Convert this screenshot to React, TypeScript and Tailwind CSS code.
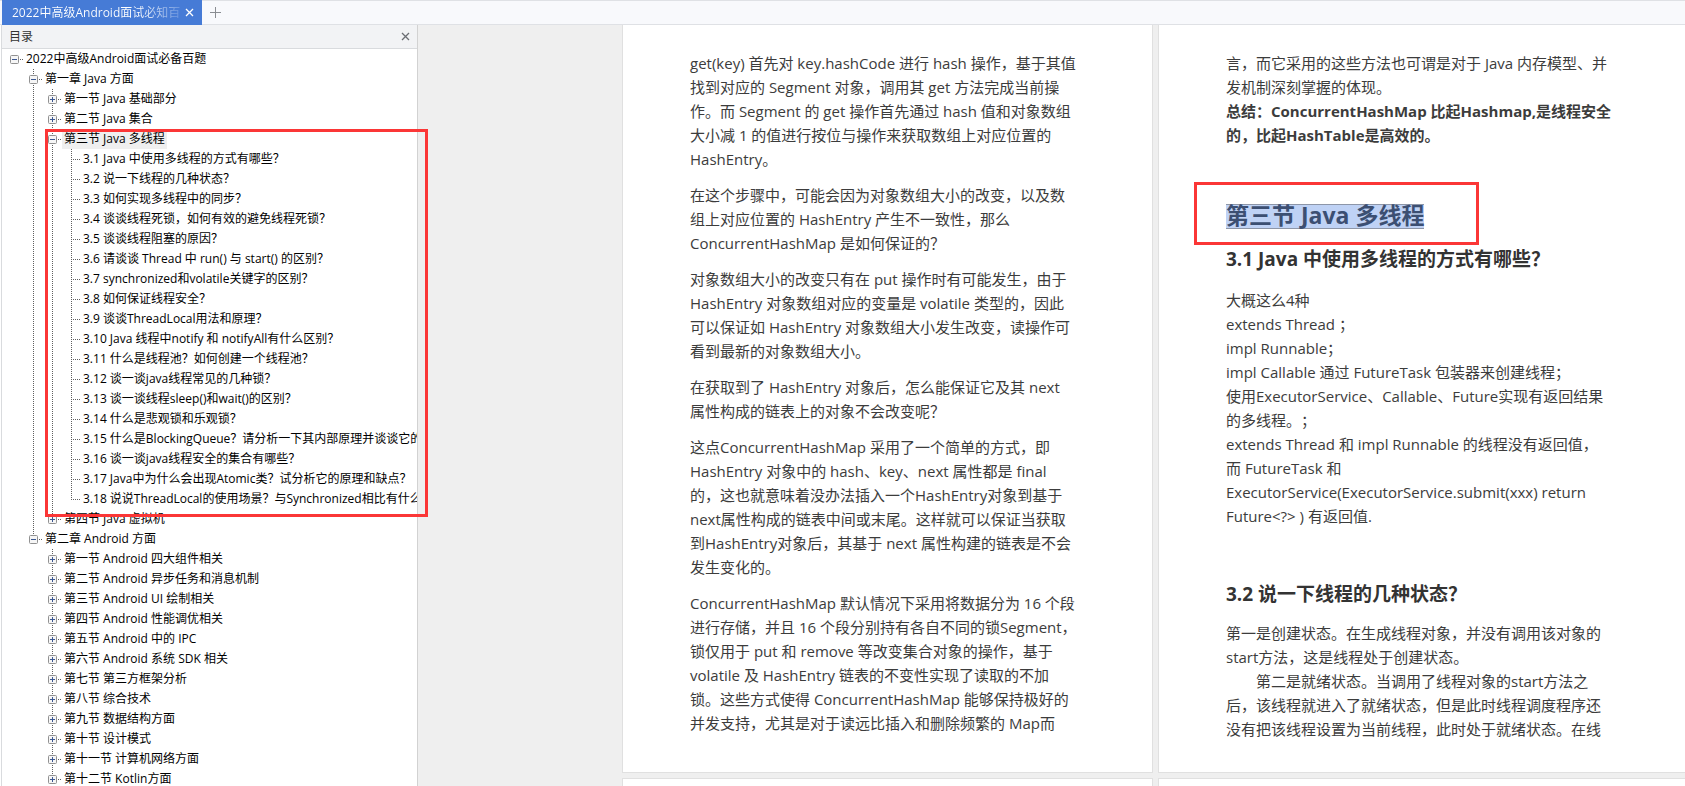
type TreeNode = {
  title: string;
  open?: boolean;
  selected?: boolean;
  children?: TreeNode[];
};

const section = (title: string): TreeNode => ({ title, open: false, children: [] });
const leaf = (title: string): TreeNode => ({ title });

const outline: TreeNode = {
  title: "2022中高级Android面试必备百题",
  open: true,
  children: [
    {
      title: "第一章 Java 方面",
      open: true,
      children: [
        section("第一节 Java 基础部分"),
        section("第二节 Java 集合"),
        {
          title: "第三节 Java 多线程",
          open: true,
          selected: true,
          children: [
            leaf("3.1 Java 中使用多线程的方式有哪些？"),
            leaf("3.2 说一下线程的几种状态？"),
            leaf("3.3 如何实现多线程中的同步？"),
            leaf("3.4 谈谈线程死锁，如何有效的避免线程死锁？"),
            leaf("3.5 谈谈线程阻塞的原因？"),
            leaf("3.6 请谈谈 Thread 中 run() 与 start() 的区别？"),
            leaf("3.7 synchronized和volatile关键字的区别？"),
            leaf("3.8 如何保证线程安全？"),
            leaf("3.9 谈谈ThreadLocal用法和原理？"),
            leaf("3.10 Java 线程中notify 和 notifyAll有什么区别？"),
            leaf("3.11 什么是线程池？如何创建一个线程池？"),
            leaf("3.12 谈一谈java线程常见的几种锁？"),
            leaf("3.13 谈一谈线程sleep()和wait()的区别？"),
            leaf("3.14 什么是悲观锁和乐观锁？"),
            leaf("3.15 什么是BlockingQueue？请分析一下其内部原理并谈谈它的"),
            leaf("3.16 谈一谈java线程安全的集合有哪些？"),
            leaf("3.17 Java中为什么会出现Atomic类？试分析它的原理和缺点？"),
            leaf("3.18 说说ThreadLocal的使用场景？与Synchronized相比有什么"),
          ],
        },
        section("第四节 Java 虚拟机"),
      ],
    },
    {
      title: "第二章 Android 方面",
      open: true,
      children: [
        section("第一节 Android 四大组件相关"),
        section("第二节 Android 异步任务和消息机制"),
        section("第三节 Android UI 绘制相关"),
        section("第四节 Android 性能调优相关"),
        section("第五节 Android 中的 IPC"),
        section("第六节 Android 系统 SDK 相关"),
        section("第七节 第三方框架分析"),
        section("第八节 综合技术"),
        section("第九节 数据结构方面"),
        section("第十节 设计模式"),
        section("第十一节 计算机网络方面"),
        section("第十二节 Kotlin方面"),
      ],
    },
  ],
};

const leftPage: string[][] = [
  [
    "get(key) 首先对 key.hashCode 进行 hash 操作，基于其值",
    "找到对应的 Segment 对象，调用其 get 方法完成当前操",
    "作。而 Segment 的 get 操作首先通过 hash 值和对象数组",
    "大小减 1 的值进行按位与操作来获取数组上对应位置的",
    "HashEntry。",
  ],
  [
    "在这个步骤中，可能会因为对象数组大小的改变，以及数",
    "组上对应位置的 HashEntry 产生不一致性，那么",
    "ConcurrentHashMap 是如何保证的？",
  ],
  [
    "对象数组大小的改变只有在 put 操作时有可能发生，由于",
    "HashEntry 对象数组对应的变量是 volatile 类型的，因此",
    "可以保证如 HashEntry 对象数组大小发生改变，读操作可",
    "看到最新的对象数组大小。",
  ],
  ["在获取到了 HashEntry 对象后，怎么能保证它及其 next", "属性构成的链表上的对象不会改变呢？"],
  [
    "这点ConcurrentHashMap 采用了一个简单的方式，即",
    "HashEntry 对象中的 hash、key、next 属性都是 final",
    "的，这也就意味着没办法插入一个HashEntry对象到基于",
    "next属性构成的链表中间或末尾。这样就可以保证当获取",
    "到HashEntry对象后，其基于 next 属性构建的链表是不会",
    "发生变化的。",
  ],
  [
    "ConcurrentHashMap 默认情况下采用将数据分为 16 个段",
    "进行存储，并且 16 个段分别持有各自不同的锁Segment，",
    "锁仅用于 put 和 remove 等改变集合对象的操作，基于",
    "volatile 及 HashEntry 链表的不变性实现了读取的不加",
    "锁。这些方式使得 ConcurrentHashMap 能够保持极好的",
    "并发支持，尤其是对于读远比插入和删除频繁的 Map而",
  ],
];

const threadWays = [
  "大概这么4种",
  "extends Thread ；",
  "impl Runnable；",
  "impl Callable 通过 FutureTask 包装器来创建线程；",
  "使用ExecutorService、Callable、Future实现有返回结果",
  "的多线程。；",
  "extends Thread 和 impl Runnable 的线程没有返回值，",
  "而 FutureTask 和",
  "ExecutorService(ExecutorService.submit(xxx) return",
  "Future<?> ) 有返回值.",
];

const threadStates = [
  "第一是创建状态。在生成线程对象，并没有调用该对象的",
  "start方法，这是线程处于创建状态。",
  "　　第二是就绪状态。当调用了线程对象的start方法之",
  "后，该线程就进入了就绪状态，但是此时线程调度程序还",
  "没有把该线程设置为当前线程，此时处于就绪状态。在线",
];

const Paragraph = ({ lines, bold }: { lines: string[]; bold?: boolean }) => (
  <p className={bold ? "font-bold" : ""}>
    {lines.map((line) => (
      <span key={line} className="block whitespace-nowrap">
        {line}
      </span>
    ))}
  </p>
);

type GuideProps = { up?: boolean; down?: boolean; branch?: boolean };

// dotted connector lines for one indent step of the tree
const Guide = ({ up, down, branch }: GuideProps) => (
  <svg width="19" height="20" className="block shrink-0" stroke="#5f5f5f" strokeDasharray="1 1" aria-hidden="true">
    {up && <path d="M9.5 0V10" />}
    {down && <path d="M9.5 10V20" />}
    {branch && <path d="M9 10.5H18" />}
  </svg>
);

const Toggle = ({ up, down, open }: { up: boolean; down: boolean; open: boolean }) => (
  <button type="button" aria-label={open ? "折叠" : "展开"} className="block shrink-0">
    <svg width="19" height="20" className="block" fill="none">
      <g stroke="#5f5f5f" strokeDasharray="1 1">
        {up && <path d="M9.5 0V6" />}
        {down && <path d="M9.5 16V20" />}
        <path d="M15 10.5H18" />
      </g>
      <rect x="5.5" y="6.5" width="8" height="8" rx="1" fill="#f6f6f6" stroke="#919191" />
      <path d="M7 10.5H12" stroke="#3b5791" />
      {!open && <path d="M9.5 8V13" stroke="#3b5791" />}
    </svg>
  </button>
);

type BranchProps = { node: TreeNode; first: boolean; last: boolean; trail: boolean[] };

const Branch = ({ node, first, last, trail }: BranchProps) => {
  const isRoot = first && last;
  return (
    <li>
      <div className="flex h-5 items-center">
        {trail.map((on, i) => (
          <Guide key={i} up={on} down={on} />
        ))}
        {node.children ? (
          <Toggle up={!isRoot} down={!last} open={!!node.open} />
        ) : (
          <Guide up down={!last} branch />
        )}
        <span className={node.selected ? "h-5 bg-[#efefef] px-0.5" : "h-5 px-0.5"}>{node.title}</span>
      </div>
      {node.open && node.children && (
        <ul>
          {node.children.map((child, i) => (
            <Branch
              key={child.title}
              node={child}
              first={i === 0}
              last={i === node.children!.length - 1}
              trail={[...trail, !last]}
            />
          ))}
        </ul>
      )}
    </li>
  );
};

const CloseIcon = () => (
  <svg width="9" height="9" viewBox="0 0 9 9" stroke="currentColor" strokeWidth="1.3" aria-hidden="true">
    <path d="M1 1L8 8M8 1L1 8" />
  </svg>
);

const TabBar = () => (
  <header className="flex h-[25px] shrink-0 items-stretch border-y border-[#dfe1e5] bg-[#f8f9fc] pl-0.5">
    <div className="-my-px flex w-[200px] items-center justify-between bg-[#467bd6] pl-2.5 pr-2 text-white">
      <span className="whitespace-nowrap bg-linear-to-r from-white from-75% to-white/20 bg-clip-text text-[12px] text-transparent">
        2022中高级Android面试必知百
      </span>
      <button type="button" aria-label="关闭标签">
        <CloseIcon />
      </button>
    </div>
    <button type="button" aria-label="新建标签" className="ml-2 text-[#8a8d92]">
      <svg width="11" height="11" viewBox="0 0 11 11" stroke="currentColor" aria-hidden="true">
        <path d="M5.5 0V11M0 5.5H11" />
      </svg>
    </button>
  </header>
);

const Sidebar = () => (
  <aside className="relative flex w-[418px] shrink-0 flex-col border-r border-[#d2d2d2] bg-white text-[12px] leading-5">
    <div className="ml-px flex min-h-0 flex-1 flex-col border-l border-[#d9dbde]">
      <div className="flex h-6 shrink-0 items-center justify-between border-b border-[#d9dbde] bg-[#f2f3f5] px-[7px] text-[#333]">
        <h2>目录</h2>
        <button type="button" aria-label="关闭目录" className="text-[#6b6e73]">
          <CloseIcon />
        </button>
      </div>
      <nav aria-label="目录" className="min-h-0 flex-1 overflow-hidden whitespace-nowrap pl-[3px] text-black">
        <ul>
          <Branch node={outline} first last trail={[]} />
        </ul>
      </nav>
    </div>
    <div className="pointer-events-none absolute left-[45px] top-[104px] z-10 h-[388px] w-[383px] border-3 border-[#fb3636]" />
  </aside>
);

const Viewer = () => (
  <main className="grid min-w-0 flex-1 grid-cols-[531px_minmax(0,1fr)] grid-rows-[748px_24px] gap-x-[5px] gap-y-[5px] overflow-hidden bg-[#efefef] pl-[204px] text-[15px] leading-6 text-[#3c3c3c] [text-spacing-trim:space-all]">
    <article className="space-y-3 border border-t-0 border-[#e0e0e0] bg-white px-[67px] pt-[26px]">
      {leftPage.map((lines) => (
        <Paragraph key={lines[0]} lines={lines} />
      ))}
    </article>
    <article className="border-b border-l border-[#e0e0e0] bg-white pl-[67px] pt-[26px]">
      <Paragraph lines={["言，而它采用的这些方法也可谓是对于 Java 内存模型、并", "发机制深刻掌握的体现。"]} />
      <Paragraph bold lines={["总结：ConcurrentHashMap 比起Hashmap,是线程安全", "的，比起HashTable是高效的。"]} />
      <div className="relative mt-[57px] flex text-[23px] font-bold">
        <h2 className="h-[25px] whitespace-nowrap border-y border-[#8d96a8] bg-[#bfd2f5] leading-[21px] text-[#3c4f72]">
          第三节 Java 多线程
        </h2>
        <div className="pointer-events-none absolute -left-8 -top-[22px] h-[63px] w-[285px] border-3 border-[#fb3636]" />
      </div>
      <h3 className="mt-[18px] text-[19px] font-bold text-[#333]">3.1 Java 中使用多线程的方式有哪些？</h3>
      <div className="mt-[17px]">
        <Paragraph lines={threadWays} />
      </div>
      <h3 className="mt-[54px] text-[19px] font-bold text-[#333]">3.2 说一下线程的几种状态？</h3>
      <div className="mt-[15px]">
        <Paragraph lines={threadStates} />
      </div>
    </article>
    <article className="border border-b-0 border-[#e0e0e0] bg-white" />
    <article className="border-l border-t border-[#e0e0e0] bg-white" />
  </main>
);

export default function App() {
  return (
    <div className="flex h-screen flex-col overflow-hidden font-['Open_Sans','Noto_Sans_CJK_SC',sans-serif]" lang="zh-CN">
      <TabBar />
      <div className="flex min-h-0 flex-1">
        <Sidebar />
        <Viewer />
      </div>
    </div>
  );
}
